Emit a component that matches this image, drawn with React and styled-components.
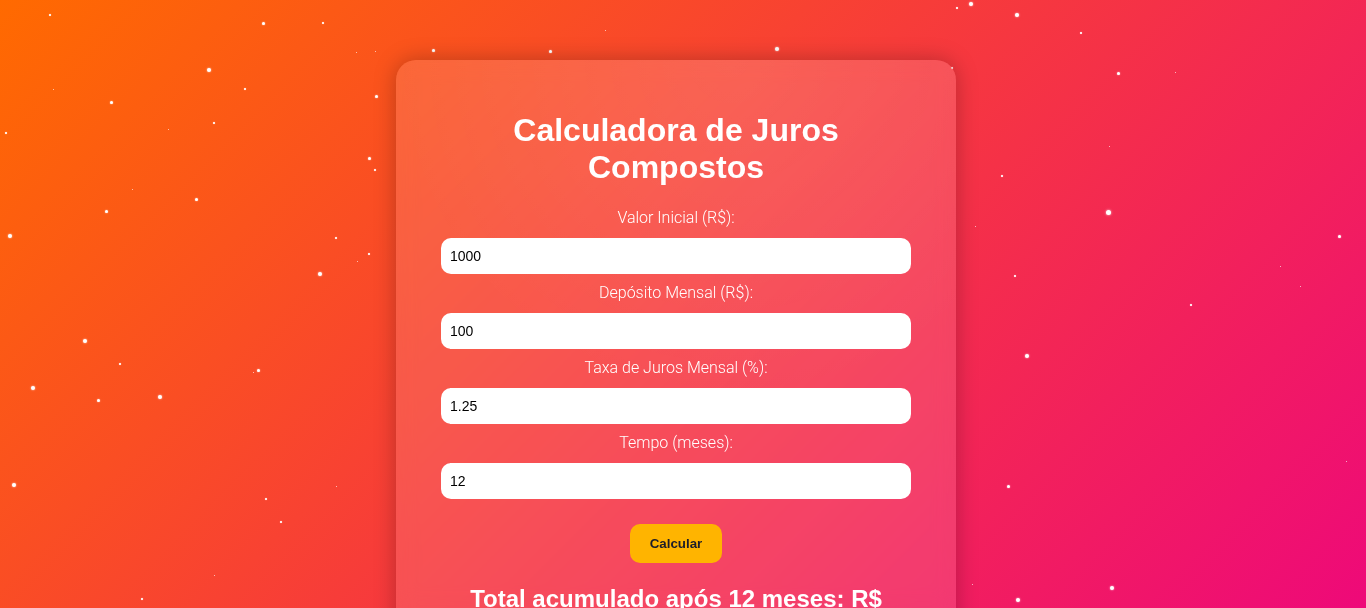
import React, { useState } from "react";
import styled, { createGlobalStyle } from "styled-components";

const GlobalStyle = createGlobalStyle`
  html {
    overflow-y: scroll;
  }
  html, body {
    margin: 0;
    padding: 0;
  }
  body {
    font-family: "Liberation Sans", Arial, sans-serif;
    background: #ee0979;
  }
  ::-webkit-scrollbar {
    width: 17px;
    background: #f1f1f1;
  }
  ::-webkit-scrollbar-thumb {
    background: #8f8f8f;
    border-radius: 8px;
    border: 4px solid #f1f1f1;
  }
`;

// star field: [x, y, size]
const stars = [
  [50, 15, 2], [263, 23, 3], [323, 23, 2], [356, 52, 1], [375, 51, 1], [209, 70, 4],
  [245, 89, 2], [53, 89, 1], [376, 96, 3], [111, 102, 3], [214, 123, 2], [168, 129, 1],
  [6, 133, 2], [369, 158, 3], [375, 170, 2], [132, 189, 1], [196, 199, 3], [106, 211, 3],
  [10, 236, 4], [336, 238, 2], [357, 261, 1], [320, 274, 4], [369, 254, 2],
  [433, 50, 3], [550, 51, 3], [605, 30, 1], [777, 49, 4],
  [957, 8, 2], [971, 4, 4], [1017, 15, 4], [1081, 33, 2], [1118, 73, 3], [1175, 72, 1],
  [1109, 146, 1], [1002, 176, 2], [1108, 212, 5], [975, 226, 1], [1339, 236, 3],
  [1280, 266, 1], [1015, 276, 2], [1300, 286, 1], [952, 68, 2],
  [1191, 305, 2], [1027, 356, 4], [1346, 461, 1], [1008, 486, 3], [972, 584, 1],
  [1112, 588, 4], [1018, 600, 4],
  [85, 341, 4], [120, 364, 2], [33, 388, 4], [98, 400, 3], [160, 397, 4], [258, 370, 3],
  [253, 372, 1], [14, 485, 4], [336, 486, 1], [266, 499, 2], [281, 522, 2], [214, 575, 1],
  [142, 599, 2],
];

const calcTotal = (initial, monthly, rate, months) => {
  const r = rate / 100;
  const values = [initial];
  let total = initial;
  for (let i = 0; i < months; i++) {
    total = total * (1 + r) + monthly;
    values.push(total);
  }
  return values;
};

const App = () => {
  const [initial, setInitial] = useState("1000");
  const [monthly, setMonthly] = useState("100");
  const [rate, setRate] = useState("1.25");
  const [months, setMonths] = useState("12");
  const [values, setValues] = useState(() => calcTotal(1000, 100, 1.25, 12));

  const handleCalc = () => {
    setValues(
      calcTotal(
        parseFloat(initial) || 0,
        parseFloat(monthly) || 0,
        parseFloat(rate) || 0,
        parseInt(months, 10) || 0
      )
    );
  };

  const total = values[values.length - 1];
  const max = Math.max(...values, 1);
  const points = values
    .map((v, i) => {
      const x = 20 + (i / Math.max(values.length - 1, 1)) * 430;
      const y = 250 - (v / max) * 220;
      return `${x},${y}`;
    })
    .join(" ");

  return (
    <>
      <GlobalStyle />
      <Sky>
        {stars.map(([x, y, s], i) => (
          <Star key={i} $size={s} style={{ left: x - s / 2, top: y - s / 2 }} />
        ))}
      </Sky>
      <Page>
        <Card>
          <Title>Calculadora de Juros Compostos</Title>
          <Form onSubmit={(e) => e.preventDefault()}>
            <Field>
              <Label htmlFor="inicial">Valor Inicial (R$):</Label>
              <Input id="inicial" type="number" value={initial} onChange={(e) => setInitial(e.target.value)} />
            </Field>
            <Field>
              <Label htmlFor="mensal">Depósito Mensal (R$):</Label>
              <Input id="mensal" type="number" value={monthly} onChange={(e) => setMonthly(e.target.value)} />
            </Field>
            <Field>
              <Label htmlFor="taxa">Taxa de Juros Mensal (%):</Label>
              <Input id="taxa" type="number" value={rate} onChange={(e) => setRate(e.target.value)} />
            </Field>
            <Field>
              <Label htmlFor="tempo">Tempo (meses):</Label>
              <Input id="tempo" type="number" value={months} onChange={(e) => setMonths(e.target.value)} />
            </Field>
            <Button type="button" onClick={handleCalc}>Calcular</Button>
          </Form>
          <Result>
            Total acumulado após {values.length - 1} meses: R$ {total.toFixed(2)}
          </Result>
          <Chart viewBox="0 0 470 270" width="470" height="270">
            <line x1="20" y1="250" x2="450" y2="250" stroke="rgba(255,255,255,0.5)" />
            <line x1="20" y1="30" x2="20" y2="250" stroke="rgba(255,255,255,0.5)" />
            <polyline points={points} fill="none" stroke="#ffb400" strokeWidth="3" />
          </Chart>
        </Card>
      </Page>
    </>
  );
};

const Sky = styled.div`
  position: fixed;
  inset: 0;
  background: linear-gradient(135deg, #ff6a00 0%, #ee0979 100%);
  overflow: hidden;
  z-index: 0;
`;

const Star = styled.span`
  position: absolute;
  width: ${(p) => (p.$size === 1 ? 1.5 : p.$size)}px;
  height: ${(p) => (p.$size === 1 ? 1.5 : p.$size)}px;
  border-radius: 50%;
  background: #fff;
  opacity: ${(p) => (p.$size === 1 ? 0.7 : 1)};
  box-shadow: 0 0 ${(p) => p.$size / 2}px rgba(255, 255, 255, 0.8);
`;

const Page = styled.main`
  position: relative;
  z-index: 1;
  display: flex;
  justify-content: center;
  padding: 60px 14px 14px 0;
`;

const Card = styled.section`
  width: 560px;
  box-sizing: border-box;
  padding: 28px 45px 40px;
  border-radius: 20px;
  background: radial-gradient(circle at 60% 0%, rgba(255, 255, 255, 0.06), transparent 35%),
    rgba(255, 255, 255, 0.12);
  backdrop-filter: blur(10px);
  box-shadow: 0 0 22px rgba(0, 0, 0, 0.25);
  display: flex;
  flex-direction: column;
  align-items: center;
  color: #fff;
  text-align: center;
`;

const Title = styled.h1`
  margin: 24px 0 23px;
  font-size: 32px;
  font-weight: 700;
  line-height: 37px;
  color: #fff;
`;

const Form = styled.form`
  width: 100%;
  display: flex;
  flex-direction: column;
  align-items: center;
`;

const Field = styled.div`
  width: 100%;
  display: flex;
  flex-direction: column;
  margin-bottom: 10px;
`;

const Label = styled.label`
  display: block;
  margin-bottom: 11px;
  font-family: Roboto, "Liberation Sans", sans-serif;
  font-weight: 300;
  font-size: 16px;
  line-height: 18px;
  color: #fff;
`;

const Input = styled.input`
  width: 100%;
  height: 36px;
  box-sizing: border-box;
  padding: 0 9px;
  border: none;
  border-radius: 10px;
  background: #fff;
  font-family: "Liberation Sans", Arial, sans-serif;
  font-size: 14px;
  color: #000;
  outline: none;
  -moz-appearance: textfield;

  &::-webkit-outer-spin-button,
  &::-webkit-inner-spin-button {
    -webkit-appearance: none;
    margin: 0;
  }
`;

const Button = styled.button`
  margin-top: 15px;
  padding: 0 20px;
  height: 39px;
  border: none;
  border-radius: 10px;
  background: #ffb400;
  color: #1c1c2a;
  font-family: "Liberation Sans", Arial, sans-serif;
  font-weight: 700;
  font-size: 13.33px;
  cursor: pointer;
`;

const Result = styled.h2`
  margin: 22px 0 0;
  font-size: 24px;
  font-weight: 700;
  line-height: 28px;
  color: #fff;
`;

const Chart = styled.svg`
  display: block;
  margin-top: 24px;
`;

export default App;
